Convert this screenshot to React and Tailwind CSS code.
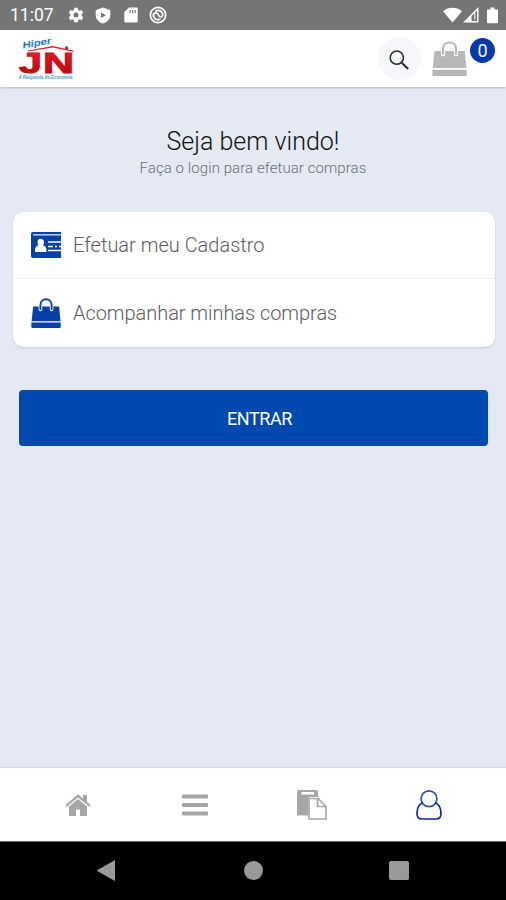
const StatusBar = () => (
    <div className="flex h-[30px] shrink-0 items-center bg-[#757575] pl-[10px] pr-[8px] text-white">
        <span className="w-[58px] pt-[1px] text-[17.500px] leading-none">11:07</span>
        <svg className="h-[16px] w-[16px]" viewBox="0 0 24 24" fill="currentColor">
            <path
                fillRule="evenodd"
                d="M9.500 1h5l.6 3.400 2 1.200 3.300-1.200 2.500 4.300-2.600 2.200v2.300l2.600 2.200-2.500 4.300-3.300-1.200-2 1.200-.6 3.300h-5l-.6-3.300-2-1.200-3.300 1.200-2.500-4.300 2.600-2.200v-2.300L1.100 8.700l2.500-4.300 3.300 1.200 2-1.200zM12 8.200a3.800 3.800 0 100 7.600 3.800 3.800 0 000-7.600z"
            />
        </svg>
        <svg className="ml-[11px] h-[17px] w-[16px]" viewBox="0 0 16 17" fill="currentColor">
            <path fillRule="evenodd" d="M8 .5l7.300 2.700v5c0 3.800-3 6.800-7.300 8.300-4.300-1.500-7.300-4.500-7.300-8.300v-5zM6 5.500v5.600l5-2.800z" />
        </svg>
        <svg className="ml-[13px] h-[16px] w-[14px]" viewBox="0 0 14 16" fill="currentColor">
            <path fillRule="evenodd" d="M5 .5h7.500c.7 0 1.200.5 1.200 1.200v12.600c0 .7-.5 1.200-1.200 1.200h-11c-.7 0-1.200-.5-1.200-1.200V5zM5.500 3v3h1.200V3zM8 3v3h1.200V3zM10.500 3v3h1.200V3z" />
        </svg>
        <svg className="ml-[11px] h-[18px] w-[18px]" viewBox="0 0 18 18" fill="none" stroke="currentColor" strokeWidth="1.700">
            <circle cx="9" cy="9" r="7.700" />
            <path d="M11.500 12.900A4.600 4.600 0 0 1 4.800 7.200M6.300 5.300a4.600 4.600 0 0 1 6.900 5.600M5.300 7.600C7.200 6.200 8.600 7.400 9.300 8.800S11.400 11.400 13 11.200" />
        </svg>
        <svg className="ml-auto h-[16px] w-[19px]" viewBox="0 0 19 16" fill="currentColor">
            <path d="M0 4.200C5.500-.4 13.500-.4 19 4.200L9.500 15.500z" />
        </svg>
        <svg className="ml-[1px] h-[16px] w-[16px]" viewBox="0 0 16 16" fill="none" stroke="currentColor" strokeWidth="1.400">
            <path d="M1.800 14.800L14.800 1.800v13z" />
            <path d="M2 15l6.500-6.500V15z" fill="currentColor" stroke="none" />
            <path d="M11.800 6v6.500" strokeWidth="1" />
        </svg>
        <svg className="ml-[8px] h-[17px] w-[11px]" viewBox="0 0 11 17" fill="currentColor">
            <path d="M3.500.5h4v2H10c.6 0 1 .4 1 1V15c0 .8-.5 1.300-1.200 1.300H1.200C.5 16.300 0 15.800 0 15V3.500c0-.6.4-1 1-1h2.500z" />
        </svg>
    </div>
);

const ShoppingBag = ({ className }) => (
    <svg className={className} viewBox="0 0 35 35" fill="currentColor">
        <path d="M2.500 10H32.800L34.400 27H.7z" />
        <path d="M.4 28.700H34.700V33.500Q34.700 35 33.200 35H1.900Q.4 35 .4 33.500z" />
        <path d="M11 13.500V8C11 -1 24 -1 24 8V13.500" fill="none" stroke="white" strokeWidth="4.200" strokeLinecap="round" />
        <path d="M11 13V8C11 -.7 24 -.7 24 8V13" fill="none" stroke="currentColor" strokeWidth="2.200" strokeLinecap="round" />
    </svg>
);

const Logo = () => (
    <svg className="h-[52px] w-[60px]" viewBox="0 0 60 52">
        <defs>
            <linearGradient id="logoRed" x1="0" y1="0" x2="0" y2="1">
                <stop offset="0.2" stopColor="#ee1620" />
                <stop offset="1" stopColor="#a8060c" />
            </linearGradient>
        </defs>
        <text x="7" y="15.500" transform="rotate(-10 7 15.500)" textLength="29" lengthAdjust="spacingAndGlyphs" fontFamily="Liberation Sans" fontSize="9" fontWeight="bold" fontStyle="italic" fill="#1475ce">
            Hiper
        </text>
        <path d="M12 17.600L37 13 58 17.800 57 18.800 37 14.400 12 18.400zM49 13.500h3v3.800L49 16.500z" fill="#dc2028" />
        <g fontFamily="Liberation Sans" fontSize="29" fontWeight="bold" fill="url(#logoRed)" stroke="#cb0d15" strokeWidth="1">
            <text x="3" y="39.800" textLength="23" lengthAdjust="spacingAndGlyphs">
                J
            </text>
            <text x="27" y="39.800" textLength="31" lengthAdjust="spacingAndGlyphs">
                N
            </text>
        </g>
        <text x="2.500" y="46.300" textLength="54" lengthAdjust="spacingAndGlyphs" fontFamily="Liberation Sans" fontSize="4.600" fontWeight="bold" fontStyle="italic" fill="#4a9ec2">
            A Resposta da Economia
        </text>
    </svg>
);

const Header = () => (
    <div className="flex h-[57px] shrink-0 items-center bg-white pl-[16px] pr-[11px] shadow-[0_1px_2px_rgba(0,0,0,0.2)]">
        <Logo />
        <button className="ml-auto flex h-[43px] w-[43px] items-center justify-center rounded-full bg-[#f5f7fb] pt-[2px] pr-[1px]">
            <svg className="h-[20px] w-[20px]" viewBox="0 0 20 20" fill="none" stroke="#252a31" strokeWidth="1.500">
                <circle cx="7.800" cy="7.700" r="6.600" />
                <path d="M12.700 12.700l6.500 6.300" strokeWidth="1.900" />
            </svg>
        </button>
        <ShoppingBag className="ml-[11px] h-[35px] w-[35px] text-[#b7b7b7]" />
        <span className="mb-[17px] ml-[3px] flex h-[25px] w-[25px] items-center justify-center rounded-full bg-[#0539a9] pt-[1px] text-[18px] leading-none text-white">
            0
        </span>
    </div>
);

const CardIcon = () => (
    <svg className="h-[26px] w-[30px]" viewBox="0 0 30 26">
        <path d="M2 0H30V26H2Q0 26 0 24V2Q0 0 2 0z" fill="#0740a9" />
        <path d="M2 2.800H30" stroke="white" strokeWidth="1.500" opacity=".75" />
        <path d="M17 10H30M17 14.500H22M24 14.500H26M28 14.500H30M17 18.500H30" stroke="white" strokeWidth="1.400" />
        <path d="M6.500 10C6.500 5.500 13 5.500 13 10 13 12 12 13.500 12 13.500 15 14 15.500 16 15.500 20H4C4 16 4.500 14 7.500 13.500 7.500 13.500 6.500 12 6.500 10z" fill="white" />
    </svg>
);

const MenuCard = () => (
    <div className="ml-[13px] mr-[11px] mt-[34px] rounded-[10px] bg-white text-[20px] font-light text-[#5c5c5c] shadow-[0_1px_2px_rgba(0,0,0,0.14)]">
        <div className="flex h-[67px] items-center border-b border-[#f0f1f3] pl-[18px]">
            <CardIcon />
            <span className="ml-[12px]">Efetuar meu Cadastro</span>
        </div>
        <div className="flex h-[68px] items-center pl-[18px]">
            <ShoppingBag className="h-[30px] w-[30px] text-[#0740a9]" />
            <span className="ml-[12px] tracking-[-0.05px]">Acompanhar minhas compras</span>
        </div>
    </div>
);

const TabBar = () => (
    <div className="grid h-[74px] shrink-0 grid-cols-4 items-center justify-items-center border-t border-[#d6d9e0] bg-white px-[19px] text-[#a6a6a6]">
        <svg className="h-[22px] w-[26px]" viewBox="0 0 26 22" fill="currentColor">
            <path d="M13 5l9 7.500V21Q22 22 21 22H15V15.500H11V22H5Q4 22 4 21V12.500z" />
            <path d="M1 12L13 1.800 25 12" fill="none" stroke="currentColor" strokeWidth="2.200" />
            <path d="M18 1H22V9.500L18 6z" />
        </svg>
        <svg className="h-[22px] w-[26px]" viewBox="0 0 26 22" fill="currentColor">
            <rect y=".5" width="26" height="4" rx="1" />
            <rect y="9" width="26" height="4" rx="1" />
            <rect y="17.500" width="26" height="4" rx="1" />
        </svg>
        <svg className="h-[30px] w-[30px]" viewBox="0 0 30 30" fill="currentColor">
            <path fillRule="evenodd" d="M1.500 0H19.500Q21 0 21 1.500V7H12.500Q11 7 11 8.500V25.500H1.500Q0 25.500 0 24V1.500Q0 0 1.500 0zM4.500 2V4.500H17V2z" />
            <path d="M12 8.500H21L29 16.500V29H12zM20.500 8.500V16.500H29" fill="none" stroke="currentColor" strokeWidth="1.700" strokeLinejoin="round" />
        </svg>
        <svg className="h-[30px] w-[26px]" viewBox="0 0 26 30" fill="none" stroke="#1a239f" strokeWidth="1.700">
            <circle cx="13" cy="8.800" r="7.900" stroke="#2456a8" />
            <path d="M6.500 13C2.500 14.500 1 18 1 23.500 1 27 3 29 6 29H20C23 29 25 27 25 23.500 25 18 23.500 14.500 19.500 13" />
        </svg>
    </div>
);

const SystemNav = () => (
    <div className="h-[59px] shrink-0 border-t border-[#666] bg-black pt-[18px]">
        <div className="flex items-center pl-[97px] text-[#999]">
            <svg className="h-[21px] w-[18px]" viewBox="0 0 18 21" fill="currentColor">
                <path d="M18 0V21L.5 11.200Q-.2 10.600.5 10z" />
            </svg>
            <span className="ml-[129px] h-[19px] w-[19px] rounded-full bg-[#999]" />
            <span className="ml-[126px] h-[19px] w-[20px] rounded-[2px] bg-[#999]" />
        </div>
    </div>
);

const App = () => {
    return (
        <div className="flex h-[900px] w-[506px] flex-col overflow-hidden bg-[#e5e9f3] font-['Roboto',sans-serif]">
            <StatusBar />
            <Header />
            <main className="flex-1">
                <div className="pt-[39px] text-center">
                    <h1 className="text-[25px] font-light leading-[31px] text-[#111]">Seja bem vindo!</h1>
                    <p className="pt-[1px] text-[15px] font-light leading-[20px] tracking-[0.08px] text-[#6c6e73]">
                        Faça o login para efetuar compras
                    </p>
                </div>
                <MenuCard />
                <div className="pl-[19px] pr-[18px] pt-[43px]">
                    <button className="h-[56px] w-full rounded-[4px] bg-[#0049ae] pl-[12px] pt-[1px] text-[18px] tracking-[-0.4px] text-white">
                        ENTRAR
                    </button>
                </div>
            </main>
            <TabBar />
            <SystemNav />
        </div>
    );
};

export default App;
